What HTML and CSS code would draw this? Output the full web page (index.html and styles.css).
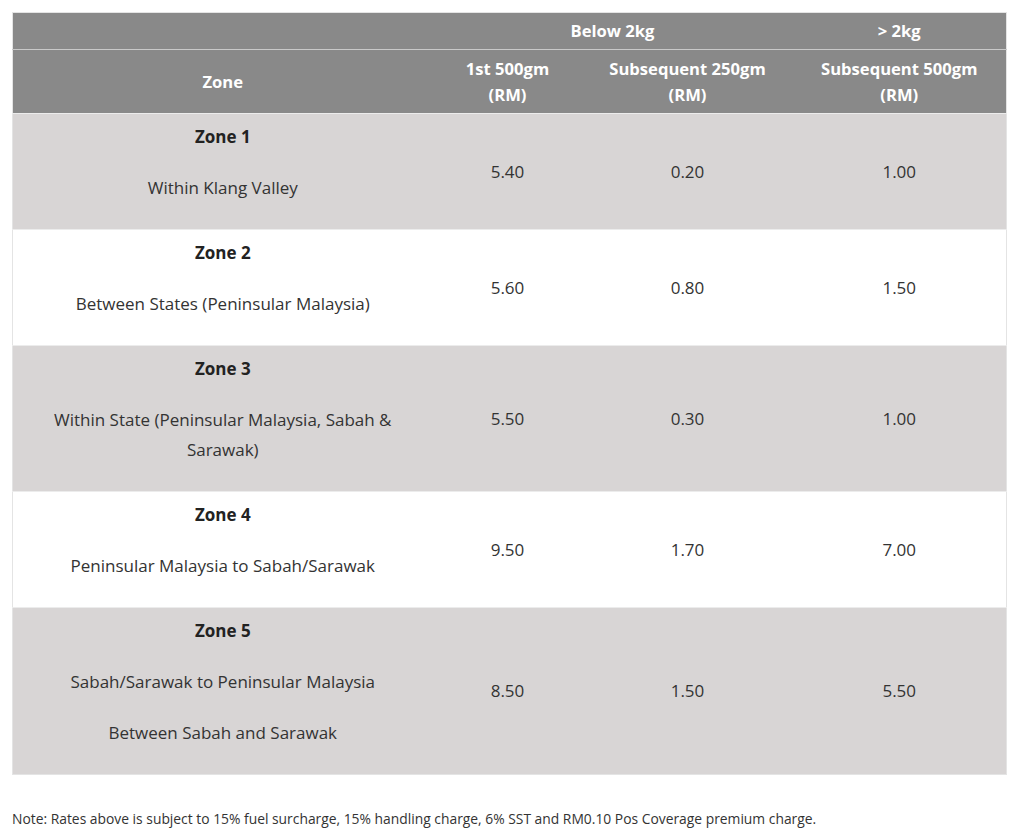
FILE: index.html
```html
<!DOCTYPE html>
<html lang="en">
<head>
<meta charset="utf-8">
<title>Rates</title>
<link rel="stylesheet" href="styles.css">
</head>
<body>
<div class="page">
  <table class="rates">
    <colgroup>
      <col class="c-zone">
      <col class="c-first">
      <col class="c-sub250">
      <col class="c-sub500">
    </colgroup>
    <thead>
      <tr class="hrow top">
        <th></th>
        <th colspan="2">Below 2kg</th>
        <th>&gt; 2kg</th>
      </tr>
      <tr class="hrow">
        <th>Zone</th>
        <th>1st 500gm<br>(RM)</th>
        <th>Subsequent 250gm<br>(RM)</th>
        <th>Subsequent 500gm<br>(RM)</th>
      </tr>
    </thead>
    <tbody>
      <tr class="shade">
        <td class="zone"><p class="zname">Zone 1</p><p>Within Klang Valley</p></td>
        <td>5.40</td><td>0.20</td><td>1.00</td>
      </tr>
      <tr>
        <td class="zone"><p class="zname">Zone 2</p><p>Between States (Peninsular Malaysia)</p></td>
        <td>5.60</td><td>0.80</td><td>1.50</td>
      </tr>
      <tr class="shade">
        <td class="zone"><p class="zname">Zone 3</p><p>Within State (Peninsular Malaysia, Sabah &amp; Sarawak)</p></td>
        <td>5.50</td><td>0.30</td><td>1.00</td>
      </tr>
      <tr>
        <td class="zone"><p class="zname">Zone 4</p><p>Peninsular Malaysia to Sabah/Sarawak</p></td>
        <td>9.50</td><td>1.70</td><td>7.00</td>
      </tr>
      <tr class="shade">
        <td class="zone"><p class="zname">Zone 5</p><p>Sabah/Sarawak to Peninsular Malaysia</p><p>Between Sabah and Sarawak</p></td>
        <td>8.50</td><td>1.50</td><td>5.50</td>
      </tr>
    </tbody>
  </table>
  <p class="note">Note: Rates above is subject to 15% fuel surcharge, 15% handling charge, 6% SST and RM0.10 Pos Coverage premium charge.</p>
</div>
</body>
</html>
```
FILE: styles.css
```css
html, body {
  margin: 0;
  padding: 0;
  background: #ffffff;
}
body {
  font-family: "Open Sans", "Noto Sans", Arial, sans-serif;
  color: #333333;
}
.page {
  padding: 12px 18px 0 12px;
}
.rates {
  width: 994px;
  border-collapse: collapse;
  table-layout: fixed;
  border: 1px solid #e4e4e4;
  font-size: 17px;
}
.c-zone { width: 420px; }
.c-first { width: 150px; }
.c-sub250 { width: 210px; }
.c-sub500 { width: 214px; }
.hrow th {
  background: #898989;
  color: #ffffff;
  font-weight: 700;
  font-size: 16.6px;
  line-height: 26px;
  padding: 6px 4px 5px 4px;
  text-align: center;
  vertical-align: middle;
}
.hrow.top th {
  padding: 5px 4px 5px 4px;
  border-bottom: 1px solid #c9c9c9;
}
tbody tr {
  border-top: 1px solid #ececec;
}
tbody td {
  text-align: center;
  vertical-align: middle;
  padding: 0 4px;
  line-height: 30px;
}
tbody td.zone {
  padding: 8px 24px 5px 24px;
}
.zone p {
  margin: 0 0 21px 0;
}
.zone .zname {
  font-weight: 700;
  color: #222222;
}
.shade td {
  background: #d8d5d5;
}
.note {
  margin: 34px 0 0 0;
  font-size: 13.85px;
  line-height: 20px;
  color: #333333;
}
```
